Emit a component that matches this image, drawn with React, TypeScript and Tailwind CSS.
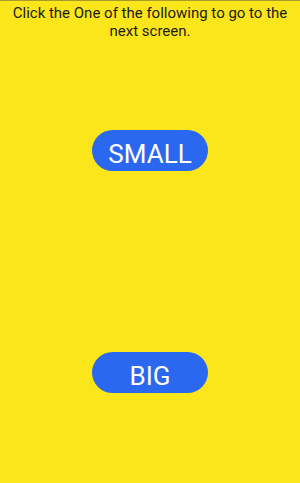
export default function App() {
  return (
    <div className="w-[300px] h-[483px] bg-[#fbe51b] border-t border-[#a99a2a] flex flex-col items-center" style={{ fontFamily: "Roboto, 'Liberation Sans', sans-serif" }}>
      <p className="text-[15px] leading-[18px] text-center text-[#1c1c1c] mt-[3px] px-2">
        Click the One of the following to go to the next screen.
      </p>
      <button className="mt-[90px] w-[116px] h-[41px] pt-[7px] rounded-full bg-[#2b68f0] text-white text-[26px] leading-none">
        SMALL
      </button>
      <button className="mt-[181px] w-[116px] h-[41px] pt-[7px] rounded-full bg-[#2b68f0] text-white text-[26px] leading-none">
        BIG
      </button>
    </div>
  )
}
